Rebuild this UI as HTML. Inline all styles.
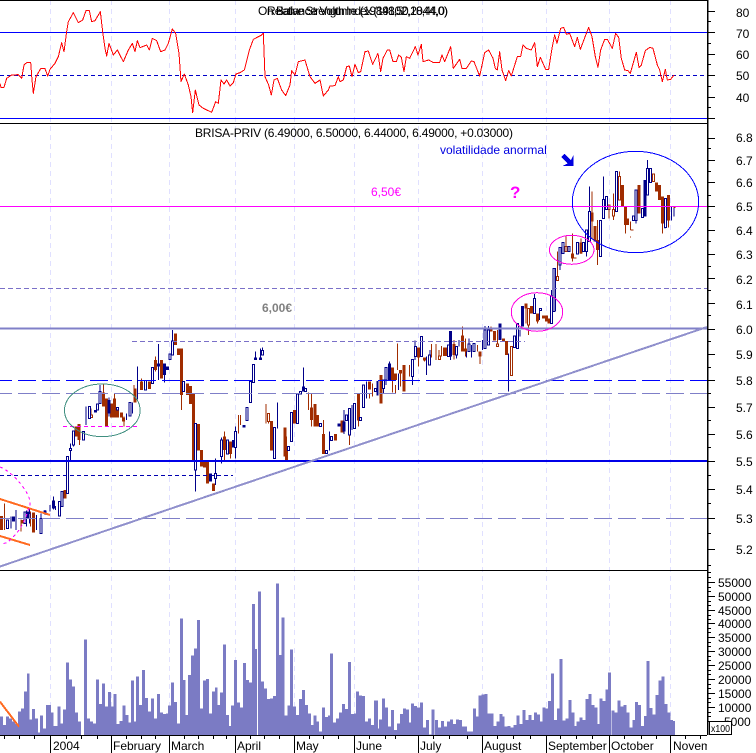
<!DOCTYPE html>
<html><head><meta charset="utf-8"><title>BRISA-PRIV</title>
<style>
html,body{margin:0;padding:0;background:#fff}
svg{display:block}
text{font-family:"Liberation Sans",Arial,sans-serif;font-size:12px;fill:#000}
.bw{stroke:#000088;stroke-width:3;fill:none}
.bh{stroke:#000088;stroke-width:3;fill:#fff}
.bf{stroke:#000088;stroke-width:9;fill:none}
.rw{stroke:#a02c00;stroke-width:3;fill:none}
.rh{stroke:#a02c00;stroke-width:3;fill:#fff}
.rf{stroke:#a02c00;stroke-width:9;fill:none}
</style></head><body>
<svg width="756" height="753" viewBox="0 0 756 753" xmlns="http://www.w3.org/2000/svg" shape-rendering="crispEdges">
<rect width="756" height="753" fill="#fff"/>
<!-- vertical grid -->
<path d="M50.5 0V735M111.5 0V735M169.5 0V735M235.5 0V735M294.5 0V735M354.5 0V735M418.5 0V735M482.5 0V735M546.5 0V735M609.5 0V735M670.5 0V735" stroke="#e0e0ff" stroke-dasharray="5 4" fill="none"/>

<!-- RSI -->
<path d="M0 32.5H707M0 118.5H707" stroke="#0000ff" fill="none"/>
<path d="M0 75.5H707" stroke="#0000c8" stroke-dasharray="4 3" fill="none"/>
<g transform="scale(.33333)" fill="none" stroke="#ff0000" stroke-width="3" stroke-linejoin="round">
<polyline points="0,250 3,262 12,262 20,235 35,225 55,224 65,235 72,195 80,188 92,187 96,240 100,280 108,230 122,206 135,206 143,228 150,208 165,190 175,170 185,128 192,155 200,95 205,65 220,38 235,68 248,60 258,32 268,32 275,65 285,62 301,35 308,95 315,145 320,168 327,130 340,165 352,150 370,185 385,150 397,130 405,155 412,122 420,143 440,135 448,150 457,115 470,122 482,155 495,150 505,130 517,87 527,100 537,160 543,245 553,222 565,255 573,290 578,338 586,270 597,315 610,325 635,337 647,305 655,310 663,240 672,252 680,240 690,258 700,248 708,222 720,218 733,210 748,150 760,118 785,105 790,100 795,230 806,255 814,285 822,240 832,235 845,270 857,287 870,255 875,212 885,225 895,185 915,180 930,230 945,250 960,240 970,288 985,270 990,258 1005,257 1015,230 1020,245 1030,240 1040,200 1048,198 1056,230 1065,193 1075,218 1082,215 1095,155 1105,153 1118,193 1134,160"/>
<polyline transform="translate(1134,0)" points="0,160 8,215 15,175 28,150 35,150 45,185 55,185 62,165 70,172 78,215 85,170 95,175 112,140 120,165 130,133 135,185 152,180 165,187 185,187 192,165 200,185 218,140 226,205 245,178 252,205 265,205 280,183 288,185 305,228 320,158 332,150 345,175 352,205 358,210 365,155 372,210 383,242 392,212 400,228 418,170 428,170 435,135 445,145 460,150 470,128 478,200 487,172 503,208 512,208 522,145 530,105 537,130 548,85 557,82 565,103 575,100 590,140 598,112 607,148 632,82 642,110 652,170 660,202 668,150 680,118 688,118 703,145 713,100 722,112 730,175 740,210 750,212 757,220 775,157 783,202 790,195 802,152 815,142 825,145 838,195 845,210 853,245 862,208 868,240 878,238 888,225"/>
</g>
<text x="258" y="15" textLength="190" lengthAdjust="spacing">On Balance Volume (1984102,1044,0)</text>
<text x="267" y="15" textLength="181" lengthAdjust="spacing">Relative Strength Index (198,50,28,44,0)</text>

<!-- Candles section A -->
<g transform="translate(0,380) scale(.33333)">
<path class="rw" d="M13 370V450M63 418V455M92 395V440M192 330V350M238 140V195M273 85V105M310 12V40M320 130V140M343 40V60M372 110V140M402 15V45"/>
<path class="bw" d="M33 410V445M48 390V450M80 392V440M88 388V430M110 405V450M123 400V415M135 390V405M150 375V395M160 350V388M167 378V390M212 190V240M220 153V200M258 80V135M300 15V40M327 52V110M380 100V120M397 68V100"/>
<path class="rf" d="M4 408V450M100 398V458M67 420V430M195 330V355M228 140V170M237 132V180M310 37V80M320 55V140M343 55V112M335 70V112M352 90V112M365 98V112M371 112V125M405 25V68"/>
<path class="bf" d="M40 410V425M85 395V415M135 392V400M160 362V385M287 90V98M327 60V100"/>
<path class="rh" d="M271 105h6V113h-6z"/>
<path class="bh" d="M20 420h6V445h-6zM72 396h6V430h-6zM85 400h5V415h-5zM120 415h6V460h-6zM175 365h6V408h-6zM183 335h6V380h-6zM199 230h6V340h-6zM209 205h6V212h-6zM217 153h6V195h-6zM248 155h6V180h-6zM265 80h6V115h-6zM290 72h6V90h-6zM297 35h6V70h-6zM349 82h6V90h-6zM387 68h6V108h-6z"/>
</g>

<!-- Candles section B -->
<g transform="translate(0,330) scale(.33333)">
<path class="bw" d="M412 110V208M475 42V150M493 100V158M518 0V75M586 420V485M646 385V465M664 322V400M706 290V385M767 65V90M781 55V90M787 52V62M832 217V295M910 112V185M988 305V362M1032 240V312M1056 225V300M1099 155V205"/>
<path class="rw" d="M424 145V180M466 80V125M544 195V240M673 305V390M691 372V385M715 255V310M722 255V285M798 222V280M805 250V280M926 188V240M935 190V290M970 270V312M1048 315V345M1075 192V290M1108 192V205M1117 160V200"/>
<path class="rf" d="M424 155V180M448 155V177M466 90V120M484 90V145M526 10V45M536 55V75M544 55V195M562 160V195M571 168V222M580 192V390M596 282V362M605 360V410M614 390V412M622 392V460M640 460V483M673 320V360M691 335V372M815 273V362M855 293V380M857 320V360M860 360V390M884 240V280M935 232V270M945 222V290M953 255V290M970 312V372M1007 312V332M1026 272V307M1075 192V272M1108 155V178"/>
<path class="bf" d="M475 100V110M493 100V135M502 110V120M632 430V455M700 330V352M732 285V292M767 82V90M781 82V90M910 170V185M1017 280V290M1032 275V305"/>
<path class="rh" d="M803 250h5V275h-5z"/>
<path class="bh" d="M433 152h6V180h-6zM454 112h6V160h-6zM507 72h6V88h-6zM515 33h6V75h-6zM548 155h6V185h-6zM583 280h6V420h-6zM643 430h6V445h-6zM661 330h6V380h-6zM679 330h6V372h-6zM703 305h6V352h-6zM738 232h6V272h-6zM748 155h6V217h-6zM757 103h6V157h-6zM784 62h6V75h-6zM820 293h6V385h-6zM863 350h6V362h-6zM872 248h6V335h-6zM889 192h6V280h-6zM898 185h6V192h-6zM914 175h6V185h-6zM959 280h6V290h-6zM977 362h6V370h-6zM992 320h6V332h-6zM1037 255h6V272h-6zM1045 235h6V315h-6zM1061 220h6V295h-6zM1079 262h6V272h-6zM1087 165h6V232h-6zM1123 175h6V185h-6zM1131 155h3V195h-3z"/>
</g>

<!-- Candles section C -->
<g transform="translate(380,270) scale(.33333)">
<path class="bw" d="M10 355V370M18 330V345M28 275V330M55 310V360M97 320V345M105 212V270M140 260V315M150 240V285M212 183V270M229 255V265M237 210V230M260 240V262M267 205V245M275 225V262M308 210V240M315 168V235M325 168V225M360 160V210M385 250V365M420 180V200M428 108V170M463 72V130M479 115V150M514 60V160"/>
<path class="rw" d="M38 330V368M46 370V345M52 220V300M62 300V350M88 285V320M115 262V290M133 272V275M155 222V262M168 222V270M177 240V258M185 228V260M222 210V268M247 170V197M256 205V260M292 225V245M300 260V282M333 170V178M352 180V222M372 205V213M438 100V160M445 165V195M472 155V160"/>
<path class="rf" d="M3 315V400M38 292V330M46 310V330M62 300V310M72 285V365M115 232V262M133 262V272M193 232V258M199 232V258M222 222V255M247 197V245M256 235V245M300 245V260M333 178V185M343 183V212M370 205V215M380 213V255M438 100V115M455 108V130M472 130V155M490 137V145M500 137V155M507 145V160"/>
<path class="bf" d="M28 280V330M212 183V260M360 160V210M428 108V170"/>
<path class="rh" d="M349 222h6V230h-6zM392 230h5V316h-5zM443 115h6V165h-6zM175 258h6V268h-6z"/>
<path class="bh" d="M7 330h6V355h-6zM15 293h6V330h-6zM95 268h6V320h-6zM103 230h6V260h-6zM121 200h6V260h-6zM145 255h6V285h-6zM202 225h6V260h-6zM226 230h6V255h-6zM264 222h6V245h-6zM279 220h6V245h-6zM312 180h6V235h-6zM322 180h6V225h-6zM400 198h6V232h-6zM409 160h6V235h-6zM460 85h6V130h-6zM478 115h6V122h-6zM511 78h6V160h-6zM520 -5h6V122h-6z"/>
</g>
<!-- Candles bridging 550-556 -->
<g transform="translate(378,130) scale(.33333)">
<path class="rw" d="M538 368V440"/>
<path class="rh" d="M535 440h6V452h-6z"/>
<path class="bh" d="M525 415h6V545h-6z"/>
</g>
<!-- Candles section D -->
<g transform="translate(555,150) scale(.33333)">
<path class="rw" d="M7 305V360M33 260V305M52 250V335M78 265V312M111 125V265M128 210V345M162 178V205M175 130V210M193 65V150M211 225V250M227 260V262M227 215V240M322 220V250M340 212V232"/>
<path class="bw" d="M15 345V360M95 305V320M103 110V185M145 80V148M243 212V220M278 30V55M330 232V236M349 170V212M357 172V200"/>
<path class="rf" d="M52 310V325M60 323V326M78 278V310M111 188V215M120 228V275M128 270V300M203 105V168M211 170V225M218 205V225M252 105V190M304 97V125M313 105V150M322 140V220M340 135V212"/>
<path class="bf" d="M270 90V200"/>
<path class="rw" d="M227 240H236M356 173H362" />
<path class="rh" d="M30 290h6V305h-6zM159 165h6V178h-6zM172 178h6V198h-6zM190 80h6V150h-6zM292 72h6V95h-6z"/>
<path class="bh" d="M12 292h6V345h-6zM21 278h6V310h-6zM39 290h6V305h-6zM65 278h6V312h-6zM83 278h6V305h-6zM92 240h6V305h-6zM100 185h6V275h-6zM134 212h6V320h-6zM142 148h6V205h-6zM151 140h6V178h-6zM181 65h6V185h-6zM232 198h6V212h-6zM240 120h6V212h-6zM260 175h6V203h-6zM275 55h6V135h-6zM284 55h6V97h-6zM328 145h6V232h-6z"/>
</g>

<!-- Price level lines -->
<path d="M0 288.5H707" stroke="#7a70c8" stroke-dasharray="5 3" fill="none"/>
<path d="M132 341.5H525" stroke="#7a70c8" stroke-dasharray="5 3" fill="none"/>
<path d="M0 206.5H707" stroke="#ff00ff" fill="none"/>
<path d="M0 328.5H707" stroke="#8080c8" stroke-width="2" fill="none"/>
<path d="M-6 380.5H707" stroke="#0000ff" stroke-dasharray="18 6" fill="none"/>
<path d="M-6 393.5H707" stroke="#7f7fc8" stroke-dasharray="18 6" fill="none"/>
<path d="M0 461H707" stroke="#0000e8" stroke-width="2" fill="none"/>
<path d="M0 475.5H233" stroke="#0000b0" stroke-dasharray="4 3" fill="none"/>
<path d="M-6 518.5H707" stroke="#7f7fc8" stroke-dasharray="18 6" fill="none"/>
<path d="M63 426.5H139" stroke="#ff00ff" stroke-dasharray="4 3" fill="none"/>
<path d="M0 566.5L707 327" stroke="#9090cc" stroke-width="2" fill="none"/>
<!-- Orange lines, arcs -->
<path d="M0 499L50 515M0 536L30 545" stroke="#ff6a20" stroke-width="2" fill="none"/>
<path d="M0 467Q12 472 23 487T28 510Q24 525 15 535T3 543" stroke="#ff00ff" stroke-dasharray="3 3" fill="none"/>
<ellipse cx="102.3" cy="410.3" rx="37.8" ry="26.3" fill="none" stroke="#408f80"/>
<ellipse cx="537" cy="312" rx="25.7" ry="19.3" fill="none" stroke="#ff00e0"/>
<ellipse cx="571.7" cy="249.8" rx="22.3" ry="14.5" fill="none" stroke="#ff00e0"/>
<ellipse cx="635.5" cy="202" rx="63.2" ry="50.7" fill="none" stroke="#0000ff"/>
<path d="M561 157L564.5 154L571 160L573.5 155V166H562.5L567.5 163.5Z" fill="#0000e0"/>

<text x="195" y="137" textLength="318" lengthAdjust="spacing">BRISA-PRIV (6.49000, 6.50000, 6.44000, 6.49000, +0.03000)</text>
<text x="440" y="154" style="fill:#0000e0">volatilidade anormal</text>
<text x="371" y="196" style="fill:#ff00ff">6,50€</text>
<text x="510" y="198" style="fill:#ff00ff;font-size:17px;font-weight:bold">?</text>
<text x="262" y="312" style="fill:#808080;font-weight:bold">6,00€</text>

<!-- Volume -->
<g transform="translate(0,570) scale(.33333)">
<path fill="#7b7bc4" d="M0 495V440H9V465H18V440H27V445H36V455H45V462H54V425H63V415H72V365H81V310H88V448H96V417H105V445H114V488H120V437H129V475H138V405H153V428H160V468H173V410H182V460H189V418H198V277H207V328H216V350H225V428H234V455H243V495H252V208H261V445H270V455H279V460H288V328H297V402H306V340H315V410H324V366H333V410H340V372H349V462H358V453H367V406H376V435H385V457H393V332H402V455H408V320H417V405H426V300H435V384H444V425H453V385H462V445H471V372H480V428H489V432H498V430H504V406H513V337H522V396H531V460H540V145H549V330H556V435H564V315H573V257H582V236H591V150H600V415H609V332H618V327H627V430H636V365H645V352H652V405H660V368H669V223H678V435H687V468H693V406H702V270H711V397H720V412H729V279H738V330H747V338H756V102H765V237H771V495H774V64H783V335H792V355H801V387H810V385H819V378H828V40H837V255H844V142H853V437H862V407H870V238H879V410H888V435H897V387H906V360H915V405H924V430H933V465H940V436H949V455H957V484H966V412H975V441H984V437H990V250H999V457H1008V445H1017V428H1026V402H1035V417H1044V276H1053V432H1062V430H1068V364H1077V376H1086V378H1095V455H1104V445H1113V465H1122V392H1134V495z"/>
<path fill="#7b7bc4" transform="translate(1134,0)" d="M0 495V475H3V448H12V385H21V413H30V470H39V420H48V480H57V460H66V432H75V415H84V418H93V457H99V400H108V408H117V412H126V397H135V473H144V450H153V493H160V418H169V495H171V450H180V473H189V453H198V470H207V455H216V448H225V462H234V448H243V450H252V470H267V485H285V415H294V440H301V377H310V373H319V372H328V431H337V430H346V468H355V455H364V432H373V440H380V470H389V468H398V473H407V465H415V437H424V462H433V420H442V450H451V435H460V450H468V427H477V433H486V455H493V412H502V416H510V393H519V310H528V450H537V415H544V267H553V452H562V445H571V390H580V427H589V468H596V455H605V442H614V450H623V387H632V372H641V405H650V412H659V462H665V385H674V393H683V358H690V307H699V495H701V421H710V427H719V391H728V410H737V405H746V427H755V473H764V450H771V396H780V405H789V468H798V438H805V273H814V414H823V433H832V375H841V332H850V319H859V402H868V427H877V450H885V453H891V495z"/>
</g>
<path d="M0 701.7L19 726.7" stroke="#ff6a20" stroke-width="2" fill="none"/>

<!-- Frame lines -->
<path d="M0 .5H707M0 123.5H707M0 570.5H707M0 735.5H707" stroke="#000" fill="none"/>
<path d="M707.5 0V735" stroke="#000" stroke-width="1.5" fill="none"/>
<!-- RSI ticks -->
<path stroke="#000" fill="none" d="M707 11.5h8M707 32.5h8M707 54.5h8M707 75.5h8M707 97.5h8M707 118.5h8M707 21.5h4M707 43.5h4M707 64.5h4M707 86.5h4M707 107.5h4"/>
<!-- Main ticks -->
<path stroke="#000" fill="none" d="M707 138.5h8M707 160.5h8M707 182.5h8M707 206.5h8M707 230.5h8M707 254.5h8M707 278.5h8M707 303.5h8M707 329.5h8M707 354.5h8M707 380.5h8M707 407.5h8M707 434.5h8M707 461.5h8M707 489.5h8M707 518.5h8M707 549.5h8M707 148.5h4M707 171.5h4M707 195.5h4M707 217.5h4M707 241.5h4M707 266.5h4M707 290.5h4M707 315.5h4M707 341.5h4M707 367.5h4M707 393.5h4M707 420.5h4M707 447.5h4M707 475.5h4M707 503.5h4M707 533.5h4M707 565.5h4"/>
<!-- Volume ticks -->
<path stroke="#000" fill="none" d="M707 582.5h8M707 596.5h8M707 610.5h8M707 623.5h8M707 637.5h8M707 651.5h8M707 665.5h8M707 679.5h8M707 693.5h8M707 707.5h8M707 721.5h8M707 572.5h4M707 577.5h4M707 587.5h4M707 591.5h4M707 601.5h4M707 605.5h4M707 615.5h4M707 619.5h4M707 628.5h4M707 632.5h4M707 642.5h4M707 646.5h4M707 656.5h4M707 660.5h4M707 670.5h4M707 674.5h4M707 684.5h4M707 688.5h4M707 698.5h4M707 702.5h4M707 712.5h4M707 716.5h4"/>
<!-- x ticks -->
<path stroke="#000" fill="none" d="M50.5 735V753M111.5 735V753M169.5 735V753M235.5 735V753M294.5 735V753M354.5 735V753M418.5 735V753M482.5 735V753M546.5 735V753M609.5 735V753M670.5 735V753M4.5 735v4M19.5 735v4M34.5 735v4M66.5 735v4M81.5 735v4M97.5 735v4M126.5 735v4M141.5 735v4M155.5 735v4M184.5 735v4M198.5 735v4M213.5 735v4M226.5 735v4M250.5 735v4M264.5 735v4M279.5 735v4M309.5 735v4M323.5 735v4M338.5 735v4M369.5 735v4M385.5 735v4M395.5 735v4M433.5 735v4M449.5 735v4M467.5 735v4M497.5 735v4M513.5 735v4M530.5 735v4M560.5 735v4M576.5 735v4M592.5 735v4M624.5 735v4M641.5 735v4M656.5 735v4M685.5 735v4M700.5 735v4"/>
<!-- Y labels -->
<text x="736" y="17">80</text><text x="736" y="38">70</text><text x="736" y="59">60</text><text x="736" y="80">50</text><text x="736" y="102">40</text>
<text x="736" y="142">6.8</text><text x="736" y="165">6.7</text><text x="736" y="187">6.6</text><text x="736" y="211">6.5</text><text x="736" y="235">6.4</text><text x="736" y="259">6.3</text><text x="736" y="284">6.2</text><text x="736" y="309">6.1</text><text x="736" y="334">6.0</text><text x="736" y="359">5.9</text><text x="736" y="385">5.8</text><text x="736" y="412">5.7</text><text x="736" y="439">5.6</text><text x="736" y="466">5.5</text><text x="736" y="494">5.4</text><text x="736" y="523">5.3</text><text x="736" y="554">5.2</text>
<text x="718" y="587">55000</text><text x="718" y="601">50000</text><text x="718" y="615">45000</text><text x="718" y="628">40000</text><text x="718" y="642">35000</text><text x="718" y="656">30000</text><text x="718" y="670">25000</text><text x="718" y="684">20000</text><text x="718" y="698">15000</text><text x="718" y="712">10000</text><text x="724" y="726">5000</text>
<rect x="709.5" y="721.5" width="22" height="13" fill="#fff" stroke="#000"/>
<text x="711" y="732" style="font-size:10.5px" textLength="19" lengthAdjust="spacingAndGlyphs">x100</text>
<!-- X labels -->
<text x="53" y="750">2004</text><text x="113" y="750">February</text><text x="171" y="750">March</text><text x="237" y="750">April</text><text x="296" y="750">May</text><text x="356" y="750">June</text><text x="420" y="750">July</text><text x="484" y="750">August</text><text x="548" y="750">September</text><text x="611" y="750">October</text>
<svg x="0" y="735" width="707" height="18"><text x="673" y="15">November</text></svg>
</svg>
</body></html>
